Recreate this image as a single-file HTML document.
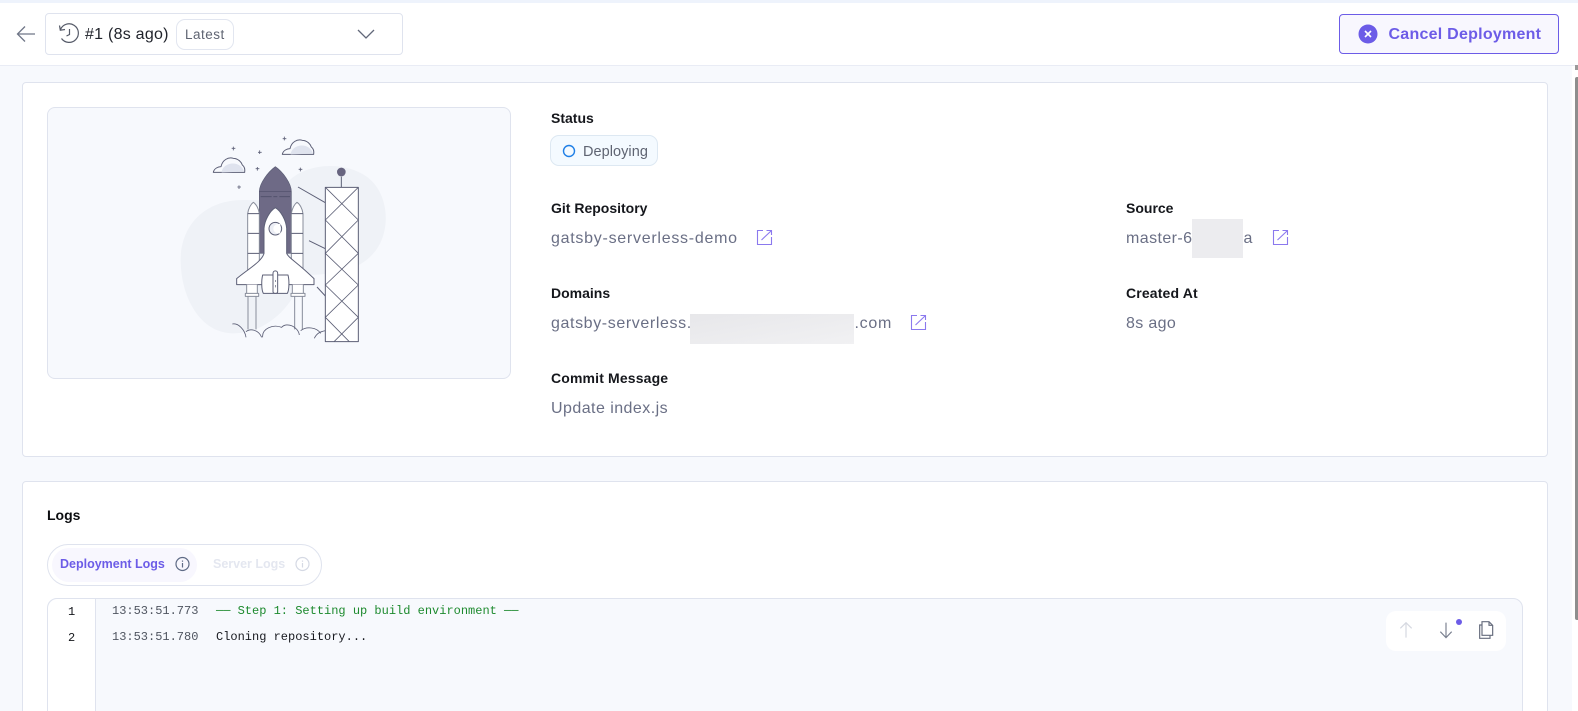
<!DOCTYPE html>
<html><head><meta charset="utf-8"><style>
html,body{margin:0;padding:0;width:1578px;height:711px;overflow:hidden;background:#f7f9fd;font-family:"Liberation Sans",sans-serif}
#r{position:relative;width:1578px;height:711px;overflow:hidden}
.a{position:absolute;box-sizing:border-box}
.t{position:absolute;white-space:nowrap;line-height:20px}
.l{font-size:14px;font-weight:700;color:#15171c;height:20px}
.v{font-size:16px;color:#6a6f85;height:20px}
.m{font-family:"Liberation Mono",monospace;font-size:12px;line-height:16px}
svg{position:absolute;overflow:visible}
</style></head><body><div id="r">
<div class="a" style="left:0;top:0;width:1578px;height:3px;background:#eef3fc"></div>
<div class="a" style="left:0;top:3px;width:1578px;height:63px;background:#fff;border-bottom:1px solid #e9ecf5"></div>

<svg style="left:0;top:0" width="44" height="66" fill="none" stroke="#6f7687" stroke-width="1.3"><path d="M35 34H17.5M25 26.5L17.5 34L25 41.5"/></svg>
<div class="a" style="left:45px;top:13px;width:358px;height:42px;background:#fff;border:1px solid #dfe3ee;border-radius:4px"></div>
<svg style="left:0;top:0" width="90" height="66" fill="none" stroke="#555a68" stroke-width="1.2"><path d="M60.5 29.5A9.3 9.3 0 1 1 61.5 38.5M59.5 25.5L60.3 30.2L65 29.5M69.5 29V34.5L66.5 36"/></svg>
<div class="t" style="left:85px;top:25px;font-size:16px;color:#20232b;letter-spacing:.25px">#1 (8s ago)</div>
<div class="a" style="left:176px;top:19px;width:58px;height:31px;background:#fff;border:1px solid #e2e6f0;border-radius:9px"></div>
<div class="t" style="left:185px;top:25px;font-size:13.5px;color:#5f6472;letter-spacing:.5px">Latest</div>
<svg style="left:0;top:0" width="380" height="66" fill="none" stroke="#62687a" stroke-width="1.3"><path d="M358 30L366 38L374 30"/></svg>

<div class="a" style="left:1339px;top:14px;width:220px;height:40px;background:#f8f7fe;border:1.5px solid #6c5ce7;border-radius:4px"></div>
<svg style="left:1358px;top:24px" width="20" height="20"><circle cx="10" cy="10" r="9.5" fill="#6c5ce7"/><path d="M7 7L13 13M13 7L7 13" stroke="#fff" stroke-width="1.6"/></svg>
<div class="t" style="left:1388.5px;top:25px;font-size:16px;font-weight:700;color:#6c5ce7;letter-spacing:.25px">Cancel Deployment</div>

<div class="a" style="left:22px;top:82px;width:1526px;height:375px;background:#fff;border:1px solid #dfe3ee;border-radius:4px"></div>
<div class="a" style="left:47px;top:107px;width:464px;height:272px;background:#f7f9fd;border:1px solid #dfe3ee;border-radius:8px"></div>

<svg style="left:170px;top:120px" width="230" height="230" viewBox="0 0 690 690" fill="none" stroke-linejoin="round">
<path d="M32 420C32 320 100 240 220 240C280 240 320 250 350 190C400 130 520 120 590 170C660 220 665 340 610 400C570 450 490 465 400 465C370 560 290 640 190 640C90 640 32 530 32 420Z" fill="#eff2f7"/>
<path d="M130 157C132 145 145 140 153 140C157 120 175 110 190 115C205 115 215 128 217 135C224 140 225 150 224 157Z" fill="#f7f9fd" stroke="#5c5f76" stroke-width="3"/>
<path d="M155 157C157 126 212 118 222 155Z" fill="#dfe3ee"/>
<path d="M337 103C339 91 352 86 360 86C364 66 382 56 397 61C412 61 422 74 424 81C431 86 432 96 431 103Z" fill="#f7f9fd" stroke="#5c5f76" stroke-width="3"/>
<path d="M362 103C364 72 419 64 429 101Z" fill="#dfe3ee"/>
<path d="M190 80V91M185 85H196M269 91V102M264 97H275M262 141V152M257 146H268M343 50V61M338 56H349M391 143V154M386 148H397M207 196V207M202 201H213" stroke="#5c5f76" stroke-width="2.5"/>
<path d="M268 215C268 190 295 155 316 140C338 155 364 190 364 215V400H268Z" fill="#6e6a86" stroke="#5c5f76" stroke-width="2"/>
<path d="M268 214H364" stroke="#4f4e69" stroke-width="2"/>
<path d="M272 230H305M310 230H322M328 230H360" stroke="#4f4e69" stroke-width="2.5"/>
<path d="M233 281C235 265 243 252 250 247C258 252 266 265 268 281V450H233Z" fill="#fff" stroke="#888d9b" stroke-width="3"/>
<path d="M233 281H268M233 340H268M233 400H268" stroke="#5c5f76" stroke-width="3"/>
<path d="M364 281C366 265 374 252 381 247C389 252 397 265 399 281V450H364Z" fill="#fff" stroke="#888d9b" stroke-width="3"/>
<path d="M364 281H399M364 340H399M364 400H399" stroke="#5c5f76" stroke-width="3"/>
<path d="M282 325C284 300 300 272 316 263C332 272 348 300 350 325V400C356 415 380 425 432 476V494H200V476C230 450 276 425 282 400Z" fill="#fff" stroke="#5c5f76" stroke-width="3"/>
<circle cx="316" cy="326" r="19" fill="#eceef5" stroke="#5c5f76" stroke-width="3"/>
<path d="M331 312C318 310 310 318 310 326C310 335 318 342 331 340" fill="#fff" stroke="none"/>
<path d="M278 465H354C358 480 358 510 352 520H280C274 510 274 480 278 465Z" fill="#fff" stroke="#5c5f76" stroke-width="3"/>
<path d="M309 460C309 450 323 450 323 460V515C323 522 309 522 309 515Z" fill="#fff" stroke="#5c5f76" stroke-width="3"/>
<path d="M316 480V486M316 495V502" stroke="#5c5f76" stroke-width="2"/>
<path d="M230 494V520H262V494M226 520H266V529H226ZM234 530V628M258 530V628" fill="#fff" stroke="#888d9b" stroke-width="3"/>
<path d="M367 494V520H400V494M363 520H405V529H363ZM374 530V628M397 530V628" fill="#fff" stroke="#888d9b" stroke-width="3"/>
<path d="M187 612C205 608 225 630 228 652M228 635C240 625 265 628 275 652M278 652C275 625 310 612 335 622C350 605 385 620 388 645M392 632C410 618 440 622 452 640M433 655C440 640 450 635 466 632" stroke="#5c5f76" stroke-width="2.5"/>
<path d="M384 201L466 248M417 362L466 386M441 501L466 528" stroke="#5c5f76" stroke-width="3"/>
<rect x="466" y="202" width="99" height="463" fill="#fff" stroke="#5c5f76" stroke-width="3"/>
<path d="M466 202L565 300L466 400L565 495L466 592L538 665M565 202L466 300L565 400L466 495L565 592L492 665" stroke="#5c5f76" stroke-width="2.5"/>
<path d="M514 170V202" stroke="#5c5f76" stroke-width="3"/>
<circle cx="514" cy="156" r="13" fill="#67647f"/>
</svg>

<div class="t l" style="left:551px;top:108px">Status</div>
<div class="a" style="left:550px;top:135px;width:108px;height:31px;background:#f4faff;border:1px solid #dde8f2;border-radius:9px"></div>
<svg style="left:562px;top:144px" width="14" height="14"><circle cx="7" cy="7" r="5.5" fill="none" stroke="#1f7fe6" stroke-width="1.4"/></svg>
<div class="t" style="left:583px;top:142px;font-size:14.5px;color:#5f6472;letter-spacing:.05px">Deploying</div>

<div class="t l" style="left:551px;top:198px">Git Repository</div>
<div class="t v" style="left:551px;top:229px;letter-spacing:.73px">gatsby-serverless-demo</div>
<svg style="left:757px;top:230px" width="15" height="15" fill="none" stroke="#8b79ee" stroke-width="1.1"><path d="M6 .5H.5V14.5H14.5V7M4.5 10L14 1M9.5 .5H14.5V5"/></svg>

<div class="t l" style="left:1126px;top:198px">Source</div>
<div class="t v" style="left:1126px;top:229px;letter-spacing:.42px">master-6</div>
<div class="a" style="left:1192px;top:219px;width:51px;height:39px;background:#ececef"></div>
<div class="t v" style="left:1243.5px;top:229px">a</div>
<svg style="left:1272.5px;top:230px" width="15" height="15" fill="none" stroke="#8b79ee" stroke-width="1.1"><path d="M6 .5H.5V14.5H14.5V7M4.5 10L14 1M9.5 .5H14.5V5"/></svg>

<div class="t l" style="left:551px;top:283px">Domains</div>
<div class="t v" style="left:551px;top:314px;letter-spacing:.61px">gatsby-serverless.</div>
<div class="a" style="left:690px;top:314px;width:164px;height:30px;background:linear-gradient(170deg,#e7e7ea,#f1f1f3)"></div>
<div class="t v" style="left:854.5px;top:314px;letter-spacing:.7px">.com</div>
<svg style="left:911px;top:315px" width="15" height="15" fill="none" stroke="#8b79ee" stroke-width="1.1"><path d="M6 .5H.5V14.5H14.5V7M4.5 10L14 1M9.5 .5H14.5V5"/></svg>

<div class="t l" style="left:1126px;top:283px;letter-spacing:.15px">Created At</div>
<div class="t v" style="left:1126px;top:314px;letter-spacing:.35px">8s ago</div>

<div class="t l" style="left:551px;top:368px;letter-spacing:.15px">Commit Message</div>
<div class="t v" style="left:551px;top:399px;letter-spacing:.45px">Update index.js</div>

<div class="a" style="left:22px;top:481px;width:1526px;height:260px;background:#fff;border:1px solid #dfe3ee;border-radius:4px"></div>
<div class="t" style="left:47px;top:505px;font-size:14px;font-weight:700;color:#0c0d10">Logs</div>

<div class="a" style="left:47px;top:544px;width:275px;height:42px;background:#fff;border:1px solid #dfe3ee;border-radius:21px"></div>
<div class="a" style="left:52px;top:548px;width:145px;height:34px;background:#f8f7fe;border-radius:17px"></div>
<div class="t" style="left:60px;top:554px;font-size:12.5px;font-weight:700;color:#6c5ce7">Deployment Logs</div>
<svg style="left:175px;top:556px" width="16" height="16" fill="none" stroke="#5f6b86" stroke-width="1.2"><circle cx="7.5" cy="8" r="6.5"/><path d="M7.5 7V11.5M7.5 4.5V5.7"/></svg>
<div class="t" style="left:213px;top:554px;font-size:12.5px;font-weight:700;color:#e4e7f0">Server Logs</div>
<svg style="left:295px;top:556px" width="16" height="16" fill="none" stroke="#d5d9e4" stroke-width="1.2"><circle cx="7.5" cy="8" r="6.5"/><path d="M7.5 7V11.5M7.5 4.5V5.7"/></svg>

<div class="a" style="left:47px;top:598px;width:1476px;height:140px;background:#f7f9fd;border:1px solid #dfe3ee;border-radius:10px 10px 0 0"></div>
<div class="a" style="left:48px;top:599px;width:48px;height:139px;background:#fff;border-right:1px solid #dfe3ee;border-radius:10px 0 0 0"></div>
<div class="t m" style="left:68px;top:604px;color:#15171c">1</div>
<div class="t m" style="left:68px;top:630px;color:#15171c">2</div>
<div class="t m" style="left:112px;top:603px;color:#4f5560">13:53:51.773</div>
<div class="t m" style="left:216px;top:603px;color:#1d8a2e">── Step 1: Setting up build environment ──</div>
<div class="t m" style="left:112px;top:629px;color:#4f5560">13:53:51.780</div>
<div class="t m" style="left:216px;top:629px;color:#17191f">Cloning repository...</div>

<div class="a" style="left:1386px;top:611px;width:120px;height:40px;background:#fff;border-radius:10px"></div>
<svg style="left:1360px;top:590px" width="218" height="121" viewBox="0 0 654 363" fill="none" stroke-width="3.5">
<path d="M138 143V98M121 115L138 98L155 115" stroke="#d5d8e0"/>
<path d="M258 143V98M241 125L258 143L275 125" stroke="#7a8090"/>
<circle cx="297" cy="96" r="9" fill="#6c5ce7"/>
<path d="M366 95H387L398 106V136H366ZM387 95V106H398M366 105H359V145H390V136" stroke="#666c7d"/>
</svg>

<div class="a" style="left:1572px;top:66px;width:6px;height:645px;background:#fff"></div>
<div class="a" style="left:1575px;top:65px;width:3px;height:5px;background:#9a9a9a"></div>
<div class="a" style="left:1575px;top:77px;width:3px;height:543px;background:#8e8e8e;border-radius:2px 0 0 2px"></div>
</div></body></html>
